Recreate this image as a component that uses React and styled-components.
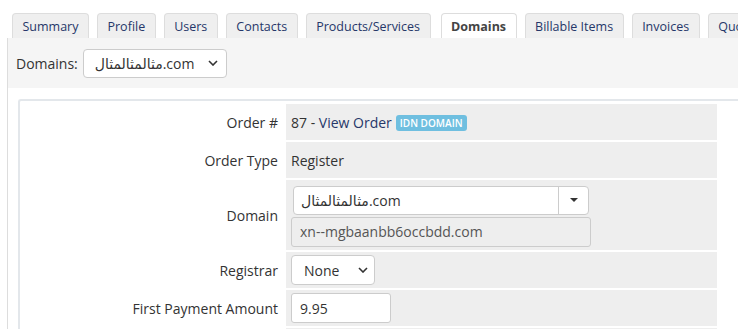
import React from 'react';
import styled, { createGlobalStyle } from 'styled-components';

const Global = createGlobalStyle`
  html, body { margin: 0; padding: 0; background: #fff; overflow: hidden; }
  body {
    font-family: "Open Sans", "DejaVu Sans", sans-serif;
    font-size: 14px;
    color: #333;
  }
  * { box-sizing: border-box; }
`;

const Page = styled.div`
  padding: 13px 0 0 7px;
  width: 800px;
`;

const Tabs = styled.ul`
  display: flex;
  list-style: none;
  margin: 0;
  padding: 0 0 0 5px;
  gap: 8px;
  height: 25px;
  white-space: nowrap;
`;

const Tab = styled.li`
  flex-shrink: 0;
  height: 25px;
  padding: 0 9.5px;
  margin-left: ${p => (p.$active ? 2 : 0)}px;
  border: 1px solid #ddd;
  border-bottom: none;
  border-radius: 4px 4px 0 0;
  background: ${p => (p.$active ? '#fff' : '#efefef')};
  color: ${p => (p.$active ? '#444' : '#263769')};
  font-size: 12.5px;
  font-weight: ${p => (p.$active ? 700 : 400)};
  line-height: 25px;
`;

const Panel = styled.div`
  border-left: 1px solid #ddd;
`;

const FilterBar = styled.div`
  display: flex;
  align-items: center;
  gap: 5px;
  height: 50px;
  padding: 0 8px;
  background: #f5f5f5;
`;

const SelectWrap = styled.div`
  position: relative;
  display: inline-block;
  width: ${p => p.$w}px;
`;

const NativeSelect = styled.select`
  appearance: none;
  -webkit-appearance: none;
  width: 100%;
  height: ${p => p.$h}px;
  padding: 0 0 0 ${p => p.$pl}px;
  border: 1px solid #ccc;
  border-radius: 4px;
  background: #fff;
  font-family: inherit;
  font-size: 14px;
  color: #333;
`;

const Chevron = styled.svg`
  position: absolute;
  top: 50%;
  right: ${p => p.$r}px;
  margin-top: -3px;
  pointer-events: none;
`;

const Content = styled.div`
  padding: 11px 0 0 10px;
`;

const Box = styled.div`
  width: 740px;
  border: 2px solid #e3e7eb;
  border-right: none;
  border-radius: 3px 0 0 0;
  padding: 1px;
`;

const Table = styled.table`
  border-collapse: separate;
  border-spacing: 2px;
  width: 698px;
`;

const Label = styled.td`
  width: 261px;
  text-align: right;
  padding: 0 6px 0 5px;
  vertical-align: middle;
  white-space: nowrap;
`;

const Value = styled.td`
  background: #eee;
  height: ${p => (p.$tall ? 70 : 36)}px;
  padding: ${p => (p.$tall ? '5px 5px 3px' : '3px 5px')};
  vertical-align: middle;
`;

const Link = styled.a`
  color: #263769;
  text-decoration: none;
`;

const Badge = styled.span`
  display: inline-block;
  margin-left: 4px;
  padding: 0 4px;
  height: 16px;
  line-height: 16px;
  border-radius: 3px;
  background: #6fbfe0;
  color: #fff;
  font-size: 10px;
  font-weight: 600;
  vertical-align: 1px;
`;

const Combo = styled.div`
  display: flex;
  width: 296px;
  height: 29px;
  margin-left: 2px;
  border: 1px solid #ccc;
  border-radius: 4px;
  background: #fff;
`;

const ComboValue = styled.div`
  flex: 1;
  padding: 0 7px;
  line-height: 27px;
  white-space: nowrap;
`;

const ComboArrow = styled.div`
  width: 30px;
  border-left: 1px solid #ccc;
  display: flex;
  align-items: center;
  justify-content: center;
`;

const Caret = styled.span`
  width: 0;
  height: 0;
  border-left: 4px solid transparent;
  border-right: 4px solid transparent;
  border-top: 4px solid #333;
`;

const TextInput = styled.input`
  display: block;
  width: ${p => p.$w}px;
  height: 30px;
  margin-top: ${p => p.$mt || 0}px;
  padding: 0 8px;
  border: 1px solid #ccc;
  border-radius: 3px;
  background: ${p => (p.readOnly ? '#eee' : '#fff')};
  color: ${p => (p.readOnly ? '#555' : '#333')};
  font-family: inherit;
  font-size: 14px;
`;

const ChevronIcon = ({ r }) => (
  <Chevron $r={r} width="10" height="6" viewBox="0 0 10 6">
    <polyline points="1,1 5,5 9,1" fill="none" stroke="#333" strokeWidth="1.6" />
  </Chevron>
);

const tabs = ['Summary', 'Profile', 'Users', 'Contacts', 'Products/Services', 'Domains', 'Billable Items', 'Invoices', 'Quotes'];

export default function App() {
  return (
    <Page>
      <Global />
      <Tabs>
        {tabs.map(t => (
          <Tab key={t} $active={t === 'Domains'}>{t}</Tab>
        ))}
      </Tabs>
      <Panel>
        <FilterBar>
          <span>Domains:</span>
          <SelectWrap $w={144}>
            <NativeSelect $h={29} $pl={11} defaultValue="d">
              <option value="d">مثالمثالمثال.com</option>
            </NativeSelect>
            <ChevronIcon r={9} />
          </SelectWrap>
        </FilterBar>
        <Content>
          <Box>
            <Table>
              <tbody>
                <tr>
                  <Label>Order #</Label>
                  <Value>87 - <Link href="#">View Order</Link><Badge>IDN DOMAIN</Badge></Value>
                </tr>
                <tr>
                  <Label>Order Type</Label>
                  <Value>Register</Value>
                </tr>
                <tr>
                  <Label>Domain</Label>
                  <Value $tall>
                    <Combo>
                      <ComboValue>مثالمثالمثال.com</ComboValue>
                      <ComboArrow><Caret /></ComboArrow>
                    </Combo>
                    <TextInput $w={300} $mt={2} readOnly value="xn--mgbaanbb6occbdd.com" />
                  </Value>
                </tr>
                <tr>
                  <Label>Registrar</Label>
                  <Value>
                    <SelectWrap $w={84}>
                      <NativeSelect $h={30} $pl={12} defaultValue="none">
                        <option value="none">None</option>
                      </NativeSelect>
                      <ChevronIcon r={7} />
                    </SelectWrap>
                  </Value>
                </tr>
                <tr>
                  <Label>First Payment Amount</Label>
                  <Value>
                    <TextInput $w={100} defaultValue="9.95" />
                  </Value>
                </tr>
                <tr>
                  <Label>Recurring Amount</Label>
                  <Value>
                    <TextInput $w={100} defaultValue="9.95" />
                  </Value>
                </tr>
              </tbody>
            </Table>
          </Box>
        </Content>
      </Panel>
    </Page>
  );
}
